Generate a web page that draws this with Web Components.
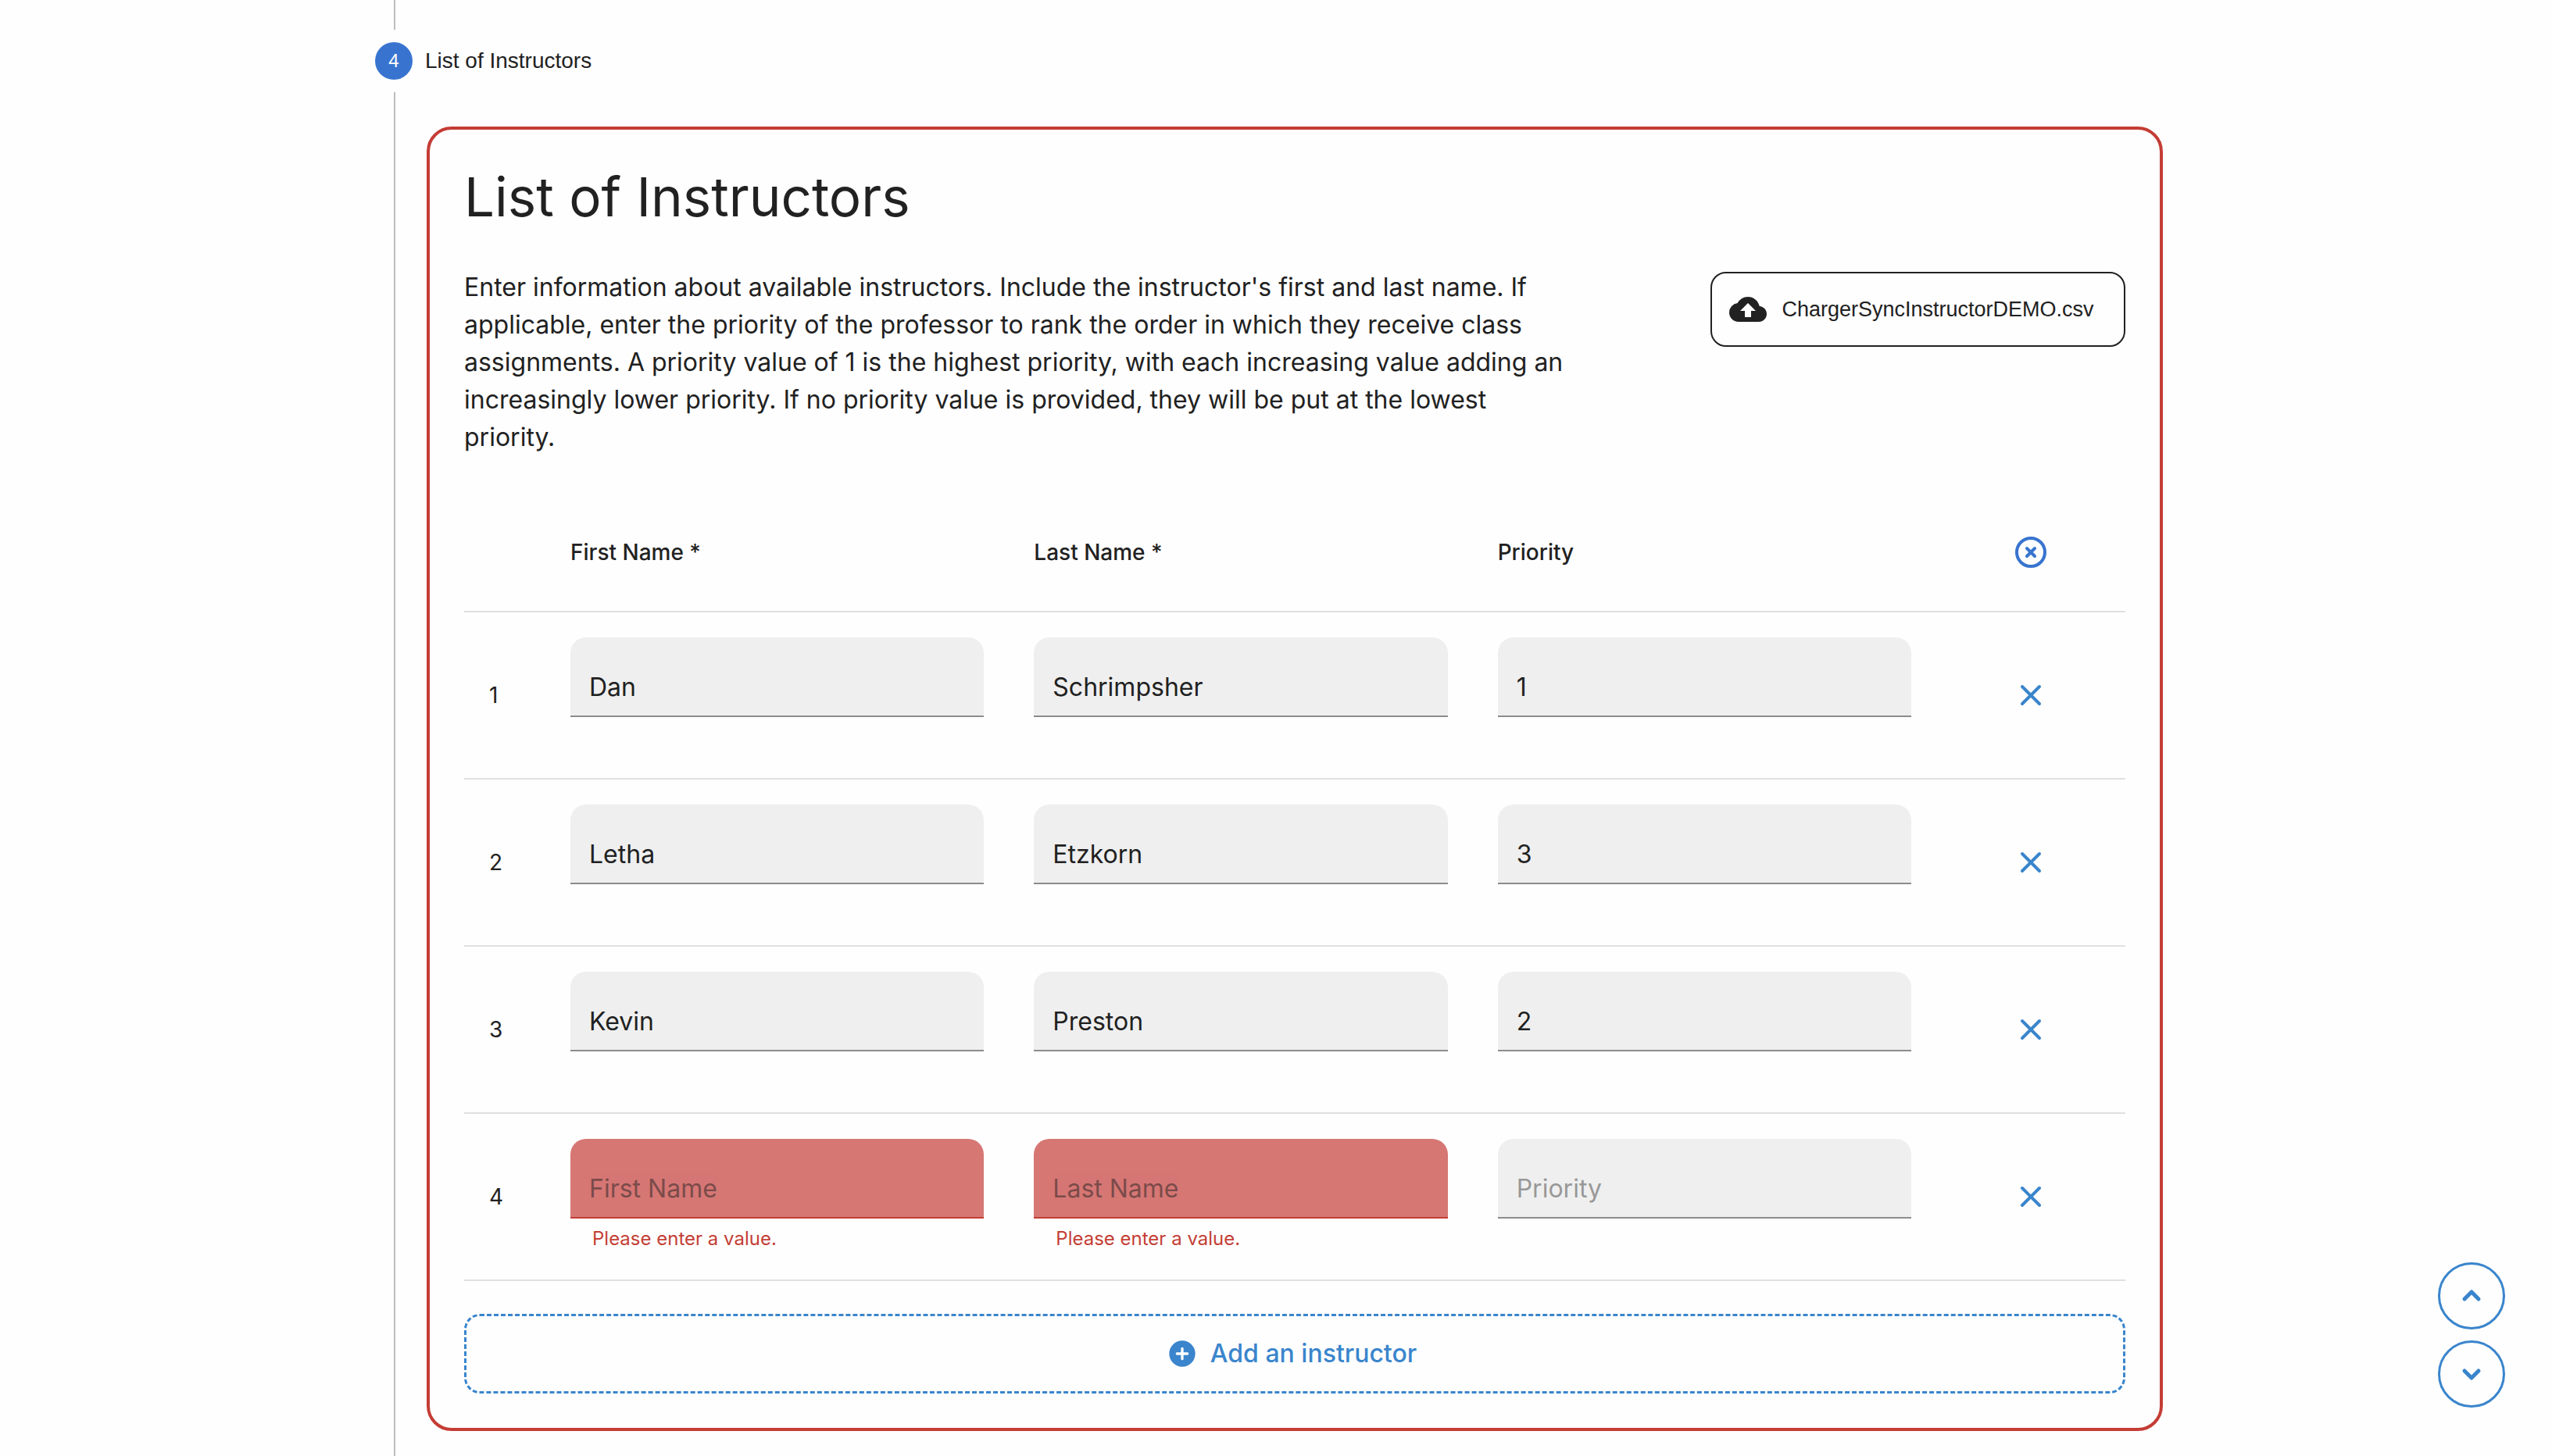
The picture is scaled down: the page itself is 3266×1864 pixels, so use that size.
<!DOCTYPE html>
<html lang="en">
<head>
<meta charset="utf-8">
<title>List of Instructors</title>
<style>
  :root {
    --ink: #212121;
    --primary: #3874cf;
    --accent: #3a85cc;
    --error: #c43d35;
    --error-fill: #d67774;
    --rule: #e0e0e0;
    --field: #efefef;
    --body-font: Inter, "Noto Sans", sans-serif;
    --label-font: "Liberation Sans", Arial, sans-serif;
  }
  body { margin: 0; background: #fefefe; color: var(--ink); font: 400 32px/48px var(--body-font); }
</style>
</head>
<body>
<wizard-page></wizard-page>

<script>
const define = (name, html, setup) => customElements.define(name, class extends HTMLElement {
  connectedCallback() {
    if (this.shadowRoot) return;
    const root = this.attachShadow({ mode: 'open' });
    const template = document.createElement('template');
    template.innerHTML = '<style>:host,*{box-sizing:border-box}</style>' + html;
    root.append(template.content.cloneNode(true));
    if (setup) setup(this, root);
  }
});

const icons = {
  cloud: '<svg viewBox="0 0 24 24" fill="currentColor"><path d="M19.35 10.04A7.49 7.49 0 0 0 12 4C9.11 4 6.6 5.64 5.35 8.04A5.994 5.994 0 0 0 0 14c0 3.31 2.69 6 6 6h13c2.76 0 5-2.24 5-5 0-2.64-2.05-4.78-4.65-4.96zM14 13v4h-4v-4H7l5-5 5 5h-3z"/></svg>',
  clear: '<svg viewBox="0 0 48 48" fill="none" stroke="currentColor" stroke-width="4" stroke-linecap="round"><path d="M13 13l22 22M35 13L13 35"/></svg>',
  clearAll: '<svg viewBox="0 0 48 48" fill="none" stroke="currentColor" stroke-width="4" stroke-linecap="round"><circle cx="24" cy="24" r="18"/><path d="M19 19l10 10M29 19L19 29"/></svg>',
  add: '<svg viewBox="0 0 48 48"><circle cx="24" cy="24" r="20" fill="currentColor"/><path d="M24 16v16M16 24h16" stroke="#fff" stroke-width="4" stroke-linecap="round"/></svg>',
  up: '<svg viewBox="0 0 48 48" fill="none" stroke="currentColor" stroke-width="5" stroke-linecap="round" stroke-linejoin="round"><path d="M15 28l9-9 9 9"/></svg>',
  down: '<svg viewBox="0 0 48 48" fill="none" stroke="currentColor" stroke-width="5" stroke-linecap="round" stroke-linejoin="round"><path d="M15 20l9 9 9-9"/></svg>'
};

define('ui-icon', `<style>
  :host { display: block; width: 48px; height: 48px; flex: none; }
  svg { display: block; width: 100%; height: 100%; }
</style>`, (host, root) => root.append(
  document.createRange().createContextualFragment(icons[host.getAttribute('name')])));

define('step-label', `<style>
  :host { display: flex; align-items: center; gap: 16px; padding: 16px 0; font: 400 28px/40px var(--label-font); }
  .badge { width: 48px; height: 48px; border-radius: 50%; background: var(--primary); color: #fff;
    font-size: 24px; line-height: 48px; text-align: center; }
</style><span class="badge"></span><slot></slot>`,
  (host, root) => { root.querySelector('.badge').textContent = host.getAttribute('number'); });

define('file-picker', `<style>
  :host { display: block; }
  button { display: flex; align-items: center; gap: 20px; width: 100%; height: 96px; padding: 0 22px;
    border: 2px solid var(--ink); border-radius: 20px; background: transparent; color: inherit;
    font: 400 27px/40px var(--label-font); text-align: left; }
</style><button type="button"><ui-icon name="cloud"></ui-icon><slot></slot></button>`);

define('text-field', `<style>
  :host { display: block; height: 148px; }
  input { display: block; width: 100%; height: 102px; padding: 40px 24px 14px; border: 0; outline: 0;
    border-bottom: 2px solid #8c8c8c; border-radius: 20px 20px 0 0; background: var(--field);
    color: var(--ink); font: 400 32px/46px var(--body-font); }
  input::placeholder { color: var(--ink); opacity: .42; }
  p { margin: 6px 28px 0; color: var(--error); font-size: 24px; line-height: 40px; }
  :host([error]) input { background: var(--error-fill); border-color: var(--error); }
  :host([error]) input::placeholder { opacity: .5; }
</style><input type="text">`, (host, root) => {
  const input = root.querySelector('input');
  const name = host.getAttribute('name');
  input.placeholder = name;
  input.value = host.getAttribute('value') || '';
  input.setAttribute('aria-label', name);
  if (host.hasAttribute('error')) {
    const message = document.createElement('p');
    message.id = 'message';
    message.textContent = host.getAttribute('error');
    input.setAttribute('aria-invalid', 'true');
    input.setAttribute('aria-describedby', 'message');
    root.append(message);
  }
});

define('icon-button', `<style>
  :host { display: flex; justify-content: center; }
  button { display: flex; align-items: center; justify-content: center; width: 80px; height: 80px; padding: 0;
    border: 0; border-radius: 50%; background: transparent; color: inherit; }
  :host([outlined]) button { width: 86px; height: 86px; border: 3px solid; background: #fefefe; }
</style><button type="button"><slot></slot></button>`,
  (host, root) => root.querySelector('button').setAttribute('aria-label', host.getAttribute('label')));

define('instructor-table', `<style>
  :host { display: block; }
  table { width: 100%; table-layout: fixed; border-collapse: separate; border-spacing: 0; }
  .index { width: 104px; }
  .action { width: 242px; }
  th, td { padding: 32px; border-bottom: 2px solid var(--rule); vertical-align: middle; text-align: left;
    font-size: 28px; line-height: 40px; font-weight: 400; }
  thead th { height: 152px; font-weight: 500; }
  th:last-child, td:last-child { padding: 0; color: var(--accent); }
  thead td:last-child { color: var(--primary); }
</style>
<table>
  <colgroup><col class="index"><col><col><col><col class="action"></colgroup>
  <thead><tr><td></td><th scope="col">First Name *</th><th scope="col">Last Name *</th><th scope="col">Priority</th>
    <td><icon-button label="Clear all instructors"><ui-icon name="clearAll"></ui-icon></icon-button></td></tr></thead>
  <tbody></tbody>
</table>`, (host, root) => {
  const rows = [['Dan', 'Schrimpsher', '1'], ['Letha', 'Etzkorn', '3'], ['Kevin', 'Preston', '2'], ['', '', '']];
  const field = (name, value, required) => `<td><text-field name="${name}" value="${value}"${
    required && !value ? ' error="Please enter a value."' : ''}></text-field></td>`;
  root.querySelector('tbody').innerHTML = rows.map(([first, last, priority], i) =>
    `<tr><td>${i + 1}</td>${field('First Name', first, true)}${field('Last Name', last, true)}${field('Priority', priority)}
     <td><icon-button label="Remove instructor ${i + 1}"><ui-icon name="clear"></ui-icon></icon-button></td></tr>`).join('');
});

define('add-button', `<style>
  :host { display: block; }
  button { display: flex; align-items: center; justify-content: center; gap: 16px; width: 100%; height: 102px;
    border: 3px dashed var(--accent); border-radius: 20px; background: transparent; color: var(--accent);
    font: 500 32px/48px var(--body-font); }
  ui-icon { width: 40px; height: 40px; margin-left: -8px; }
</style><button type="button"><ui-icon name="add"></ui-icon><slot></slot></button>`);

define('form-card', `<style>
  :host { display: block; padding: 44px; border: 4px solid var(--error); border-radius: 32px; }
  h1 { margin: 0 0 50px; font-weight: 400; font-size: 69px; line-height: 84px; }
  .intro { display: flex; justify-content: space-between; margin-bottom: 48px; }
  p { flex: 0 1 67%; margin: 0; }
  file-picker { flex: 0 0 25%; margin-top: 4px; }
  add-button { margin-top: 42px; }
</style>
<h1>List of Instructors</h1>
<div class="intro">
  <p>Enter information about available instructors. Include the instructor's first and last name. If applicable, enter the priority of the professor to rank the order in which they receive class assignments. A priority value of 1 is the highest priority, with each increasing value adding an increasingly lower priority. If no priority value is provided, they will be put at the lowest priority.</p>
  <file-picker>ChargerSyncInstructorDEMO.csv</file-picker>
</div>
<instructor-table></instructor-table>
<add-button>Add an instructor</add-button>`);

define('scroll-controls', `<style>
  :host { position: fixed; right: 60px; bottom: 62px; display: flex; flex-direction: column; gap: 14px; color: var(--accent); }
</style>
<icon-button outlined label="Previous section"><ui-icon name="up"></ui-icon></icon-button>
<icon-button outlined label="Next section"><ui-icon name="down"></ui-icon></icon-button>`);

define('wizard-page', `<style>
  :host { display: flex; flex-direction: column; max-width: 2402px; min-height: 100vh; margin: 0 auto; padding: 0 48px; }
  .connector { height: 38px; margin-left: 24px; border-left: 2px solid #bdbdbd; }
  .content { flex: 1; margin-left: 24px; padding: 44px 18px 30px 40px; border-left: 2px solid #bdbdbd; }
</style>
<div class="connector"></div>
<step-label number="4">List of Instructors</step-label>
<div class="content"><form-card></form-card></div>
<scroll-controls></scroll-controls>`);
</script>
</body>
</html>
